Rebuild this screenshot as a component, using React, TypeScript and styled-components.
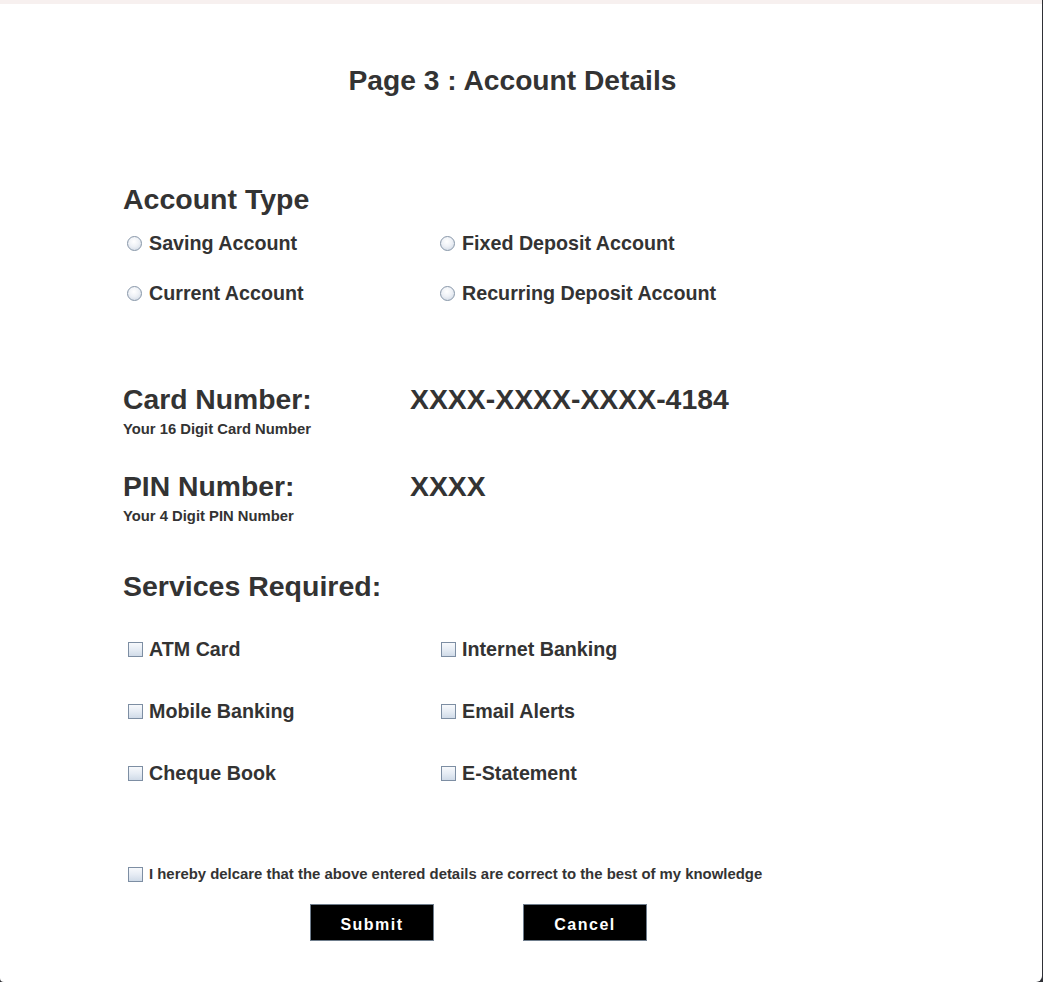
import React from "react";
import styled, { createGlobalStyle } from "styled-components";

const Global = createGlobalStyle`
  html, body {
    margin: 0;
    padding: 0;
    background: #2f3036;
  }
  body {
    font-family: "Liberation Sans", Arial, sans-serif;
  }
  * { box-sizing: border-box; }
`;

const Frame = styled.div`
  width: 1042px;
  height: 982px;
  background: #ffffff;
  border-radius: 0 0 6px 4px;
  overflow: hidden;
  display: flex;
  flex-direction: column;
  color: #333333;
  font-family: "Liberation Sans", Arial, sans-serif;
  font-weight: 700;
`;

const TopStrip = styled.div`
  height: 4px;
  background: #f7f0ef;
  flex: none;
`;

const Content = styled.div`
  display: flex;
  flex-direction: column;
  padding: 60px 0 0 123px;
`;

const Title = styled.h1`
  margin: 0 0 0 -123px;
  width: 1042px;
  text-align: center;
  font-size: 28.2px;
  line-height: 32px;
  font-weight: 700;
  padding-right: 17px;
`;

const Heading = styled.h2<{ $top: number }>`
  margin: ${(p) => p.$top}px 0 0 0;
  font-size: 28.5px;
  line-height: 32px;
  font-weight: 700;
`;

const OptionGrid = styled.div<{ $top: number; $rowGap: number; $left: number }>`
  display: grid;
  grid-template-columns: 313px 313px;
  row-gap: ${(p) => p.$rowGap}px;
  margin: ${(p) => p.$top}px 0 0 ${(p) => p.$left}px;
`;

const Option = styled.label<{ $gap?: number }>`
  display: flex;
  align-items: center;
  gap: ${(p) => p.$gap ?? 7}px;
  height: 24px;
  font-size: 19.7px;
  line-height: 24px;
`;

const Radio = styled.span`
  width: 15px;
  height: 15px;
  border-radius: 50%;
  border: 1px solid #8796a8;
  background: radial-gradient(circle at 45% 35%, #ffffff 0%, #eef1f6 45%, #c9d3e0 100%);
  flex: none;
`;

const Check = styled.span`
  width: 15px;
  height: 15px;
  border: 1px solid #7d8ea3;
  background: linear-gradient(180deg, #f7f9fc 0%, #e6ecf4 50%, #d0dbe8 100%);
  flex: none;
`;

const FieldRow = styled.div<{ $top: number }>`
  display: grid;
  grid-template-columns: 287px auto;
  margin-top: ${(p) => p.$top}px;
`;

const FieldLabel = styled.div`
  font-size: 28.3px;
  line-height: 32px;
`;

const FieldValue = styled.div`
  font-size: 28.4px;
  line-height: 32px;
`;

const Hint = styled.div`
  margin-top: 5px;
  font-size: 14.8px;
  line-height: 18px;
`;

const Declaration = styled.label`
  display: flex;
  align-items: center;
  gap: 6px;
  margin: 79px 0 0 5px;
  height: 20px;
  font-size: 14.9px;
  line-height: 20px;
`;

const Buttons = styled.div`
  display: flex;
  gap: 89px;
  margin: 20px 0 0 187px;
`;

const Button = styled.button`
  width: 124px;
  height: 37px;
  background: #000000;
  color: #ffffff;
  border: 1px solid #6f7d8c;
  font-family: "Liberation Sans", Arial, sans-serif;
  font-weight: 700;
  font-size: 16px;
  letter-spacing: 1.5px;
  padding: 4px 0 0 0;
  cursor: pointer;
`;

const accountTypes = [
  "Saving Account",
  "Fixed Deposit Account",
  "Current Account",
  "Recurring Deposit Account",
];

const services = [
  "ATM Card",
  "Internet Banking",
  "Mobile Banking",
  "Email Alerts",
  "Cheque Book",
  "E-Statement",
];

export default function App() {
  return (
    <>
      <Global />
      <Frame>
        <TopStrip />
        <Content>
          <Title>Page 3 : Account Details</Title>
          <Heading $top={87}>Account Type</Heading>
          <OptionGrid $top={16} $rowGap={26} $left={4}>
            {accountTypes.map((t) => (
              <Option key={t}>
                <Radio />
                {t}
              </Option>
            ))}
          </OptionGrid>
          <FieldRow $top={78}>
            <FieldLabel>Card Number:</FieldLabel>
            <FieldValue>XXXX-XXXX-XXXX-4184</FieldValue>
          </FieldRow>
          <Hint>Your 16 Digit Card Number</Hint>
          <FieldRow $top={32}>
            <FieldLabel>PIN Number:</FieldLabel>
            <FieldValue>XXXX</FieldValue>
          </FieldRow>
          <Hint>Your 4 Digit PIN Number</Hint>
          <Heading $top={45}>Services Required:</Heading>
          <OptionGrid $top={35} $rowGap={38} $left={5}>
            {services.map((s) => (
              <Option key={s} $gap={6}>
                <Check />
                {s}
              </Option>
            ))}
          </OptionGrid>
          <Declaration>
            <Check />
            I hereby delcare that the above entered details are correct to the best of my knowledge
          </Declaration>
          <Buttons>
            <Button>Submit</Button>
            <Button>Cancel</Button>
          </Buttons>
        </Content>
      </Frame>
    </>
  );
}
